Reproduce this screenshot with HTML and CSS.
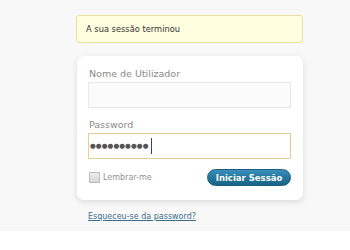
FILE: index.html
```html
<!DOCTYPE html>
<html>
<head>
<meta charset="utf-8">
<link rel="stylesheet" href="styles.css">
</head>
<body>
<div class="page">
  <div class="login">
    <div class="message">A sua sessão terminou</div>
    <form class="form">
      <label class="label">Nome de Utilizador</label>
      <div class="input"></div>
      <label class="label label-pw">Password</label>
      <div class="input input-focus"><span class="dots">●●●●●●●●●●</span><span class="caret"></span></div>
      <div class="row">
        <label class="remember"><span class="check"></span>Lembrar-me</label>
        <span class="button">Iniciar Sessão</span>
      </div>
    </form>
    <a class="lost" href="#">Esqueceu-se da password?</a>
  </div>
</div>
</body>
</html>
```
FILE: styles.css
```css
html, body {
  margin: 0;
  padding: 0;
  background: #ffffff;
  font-family: "DejaVu Sans", Verdana, sans-serif;
}
.page {
  background: #f8f8f9;
  height: 231px;
  padding-top: 15px;
  box-sizing: border-box;
}
.login {
  width: 227px;
  margin-left: 76px;
}
.message {
  height: 28px;
  box-sizing: border-box;
  background: #ffffe0;
  border: 1px solid #e8e0a0;
  border-radius: 3px;
  padding-left: 9px;
  display: flex;
  align-items: center;
  font-size: 8.3px;
  color: #333;
}
.form {
  margin: 13px 0 0 1px;
  height: 144px;
  box-sizing: border-box;
  background: #fff;
  border-radius: 7px;
  box-shadow: 0 2px 6px rgba(0,0,0,0.12);
  padding: 12px 12px 0 11px;
  display: flex;
  flex-direction: column;
}
.label {
  font-size: 9.5px;
  color: #8a8a8a;
  line-height: 12px;
  padding-left: 1px;
}
.label-pw {
  margin-top: 11px;
}
.input {
  margin-top: 2px;
  height: 26px;
  box-sizing: border-box;
  background: #fbfbfb;
  border: 1px solid #e8e8e8;
  display: flex;
  align-items: center;
}
.input-focus {
  background: #fff;
  border: 1px solid #e3cf95;
}
.dots {
  font-size: 6.6px;
  letter-spacing: 0.1px;
  color: #555;
  margin-left: 1px;
}
.caret {
  width: 1px;
  height: 16px;
  background: #444;
  margin-left: 2px;
}
.row {
  margin-top: 10px;
  display: flex;
  justify-content: space-between;
  align-items: center;
}
.remember {
  display: flex;
  align-items: center;
  font-size: 8px;
  color: #929292;
}
.check {
  width: 9px;
  height: 9px;
  border: 1px solid #bbb;
  background: linear-gradient(#eee, #d6d6d6);
  margin-right: 3px;
  margin-left: 1px;
}
.button {
  width: 84px;
  height: 17px;
  box-sizing: border-box;
  border-radius: 9px;
  background: linear-gradient(#3a8fbc, #21759b 55%, #1b6587);
  border: 1px solid #1a5f80;
  color: #fff;
  font-weight: bold;
  font-size: 8.5px;
  display: flex;
  align-items: center;
  justify-content: center;
}
.lost {
  display: block;
  margin: 12px 0 0 12px;
  font-size: 8px;
  color: #3d6d8c;
}
```
